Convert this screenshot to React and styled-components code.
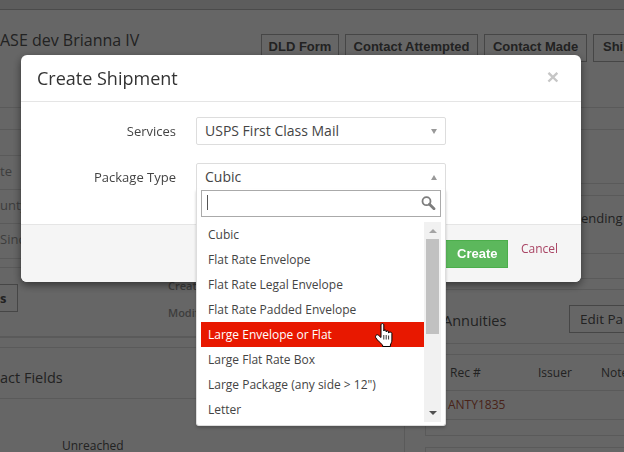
import React from 'react'
import styled, { createGlobalStyle } from 'styled-components'

const GlobalStyle = createGlobalStyle`
  html, body {
    margin: 0;
    padding: 0;
    background: #fff;
    font-family: "Open Sans", "Liberation Sans", sans-serif;
  }
`

const packageTypes = [
  'Cubic',
  'Flat Rate Envelope',
  'Flat Rate Legal Envelope',
  'Flat Rate Padded Envelope',
  'Large Envelope or Flat',
  'Large Flat Rate Box',
  'Large Package (any side > 12")',
  'Letter',
]

const HandCursor = () => (
  <svg width="18" height="24" viewBox="0 0 18 24">
    <path
      d="M6 1.800C6 .2 8.800 .2 8.800 1.800V8C8.800 6.600 11.200 6.600 11.200 8V9C11.200 7.600 13.600 7.600 13.600 9V10C13.600 8.800 16.900 8.800 16.900 10.300V17C16.900 19 15.900 20.500 15.400 22V23.500H7.600V22C6 20.500 2.500 17.500 .8 14.800C-.2 12.800 1.800 10.800 3.500 12.300L6 14.500Z"
      fill="#fff"
      stroke="#000"
      strokeWidth="1"
      strokeLinejoin="round"
    />
    <path d="M8.800 12v4.500M11.200 12v4.500M13.600 12.500v4" stroke="#333" strokeWidth="1" fill="none" />
  </svg>
)

const SearchGlyph = () => (
  <svg width="15" height="14" viewBox="0 0 15 14">
    <circle cx="5.500" cy="5.200" r="4" fill="none" stroke="#7d7d7d" strokeWidth="1.800" />
    <path d="M8.500 8.300L13 12.800" stroke="#7d7d7d" strokeWidth="2.800" strokeLinecap="round" />
  </svg>
)

const App = () => {
  return (
    <>
      <GlobalStyle />
      <Page>
        <TopBar />
        <TitleRow>
          <CaseTitle>ASE dev Brianna IV</CaseTitle>
          <Actions>
            <ActionButton $width={78}>DLD Form</ActionButton>
            <ActionButton $width={133}>Contact Attempted</ActionButton>
            <ActionButton $width={103}>Contact Made</ActionButton>
            <ActionButton $width={31} $open>Ship</ActionButton>
          </Actions>
        </TitleRow>
        <Columns>
          <LeftColumn>
            <InfoRow $height={22} />
            <InfoRow $height={26} />
            <InfoRow $height={34}>te</InfoRow>
            <InfoRow $height={34}>unty</InfoRow>
            <InfoRow $height={35}>Sinc</InfoRow>
            <InfoRow $height={9} />
            <MetaRow>
              <SmallButton>s</SmallButton>
              <MetaList>
                <MetaLabel>Creat</MetaLabel>
                <MetaLabel>Modifi</MetaLabel>
              </MetaList>
            </MetaRow>
            <Band />
            <FieldsTitle>act Fields</FieldsTitle>
            <UnreachedCell>Unreached</UnreachedCell>
          </LeftColumn>
          <RightColumn>
            <SideRow $height={22} />
            <SideRow $height={54} />
            <StatusRow>ending</StatusRow>
            <SideRow $height={25} />
            <AnnuitiesPanel>
              <AnnuitiesHeader>
                <AnnuitiesTitle>Annuities</AnnuitiesTitle>
                <EditButton>Edit Pa</EditButton>
              </AnnuitiesHeader>
              <AnnuitiesHeadRow>
                <HeadCell $width={88}>Rec #</HeadCell>
                <HeadCell $width={63}>Issuer</HeadCell>
                <HeadCell $width={23}>Note</HeadCell>
              </AnnuitiesHeadRow>
              <AnnuitiesRow>ANTY1835</AnnuitiesRow>
            </AnnuitiesPanel>
            <NextPanel />
          </RightColumn>
        </Columns>
      </Page>

      <Backdrop />

      <Modal>
        <ModalHeader>
          <ModalTitle>Create Shipment</ModalTitle>
          <CloseMark>×</CloseMark>
        </ModalHeader>
        <ModalBody>
          <FormRow>
            <FormLabel>Services</FormLabel>
            <SelectField>
              <SelectBox>
                USPS First Class Mail
                <Caret $dir="down" />
              </SelectBox>
            </SelectField>
          </FormRow>
          <FormRow>
            <FormLabel>Package Type</FormLabel>
            <SelectField>
              <SelectBox>
                Cubic
                <Caret $dir="up" />
              </SelectBox>
              <Dropdown>
                <SearchBox>
                  <TextCaret />
                  <SearchGlyph />
                </SearchBox>
                <ListArea>
                  <OptionList>
                    {packageTypes.map((name) => (
                      <Option key={name} $active={name === 'Large Envelope or Flat'}>
                        {name}
                      </Option>
                    ))}
                  </OptionList>
                  <ScrollTrack>
                    <ScrollArrow $dir="up" />
                    <ScrollThumb />
                    <ScrollArrow $dir="down" />
                  </ScrollTrack>
                </ListArea>
                <CursorSpot>
                  <HandCursor />
                </CursorSpot>
              </Dropdown>
            </SelectField>
          </FormRow>
        </ModalBody>
        <ModalFooter>
          <CreateButton>Create</CreateButton>
          <CancelLink>Cancel</CancelLink>
        </ModalFooter>
      </Modal>
    </>
  )
}

const Page = styled.div`
  width: 624px;
  height: 452px;
  overflow: hidden;
  background: #fff;
  color: #555;
`

const TopBar = styled.div`
  height: 9px;
  background: #e8e8e8;
  border-bottom: 1px solid #bbb;
`

const TitleRow = styled.div`
  display: flex;
  align-items: flex-start;
  height: 98px;
  padding-top: 24px;
  box-sizing: border-box;
  border-bottom: 1px solid #e2e2e2;
  white-space: nowrap;
`

const CaseTitle = styled.div`
  width: 261px;
  flex: none;
  margin-top: -6px;
  font-size: 16px;
  line-height: 24px;
`

const Actions = styled.div`
  display: flex;
  gap: 6px;
`

const ActionButton = styled.div`
  width: ${(p) => p.$width}px;
  flex: none;
  height: 28px;
  box-sizing: border-box;
  overflow: hidden;
  padding-left: ${(p) => (p.$open ? '9px' : '0')};
  border: 1px solid #b0b0b0;
  ${(p) => p.$open && 'border-right: 0;'}
  font-family: "Liberation Sans", Arial, sans-serif;
  font-size: 13px;
  font-weight: 700;
  line-height: 24px;
  text-align: ${(p) => (p.$open ? 'left' : 'center')};
  color: #555;
`

const Columns = styled.div`
  display: flex;
  height: 344px;
`

const LeftColumn = styled.div`
  width: 405px;
  flex: none;
  box-sizing: border-box;
  border-right: 1px solid #e2e2e2;
`

const InfoRow = styled.div`
  height: ${(p) => p.$height}px;
  box-sizing: border-box;
  padding-top: 5px;
  border-bottom: 1px solid #e2e2e2;
  font-size: 13px;
  line-height: 20px;
  color: #999;
`

const MetaRow = styled.div`
  display: flex;
  height: 68px;
  box-sizing: border-box;
  padding-top: 8px;
`

const SmallButton = styled.div`
  width: 18px;
  height: 28px;
  margin-top: 8px;
  box-sizing: border-box;
  border: 1px solid #b0b0b0;
  border-left: 0;
  font-size: 13px;
  font-weight: 700;
  line-height: 26px;
`

const MetaList = styled.div`
  display: flex;
  flex-direction: column;
  gap: 8px;
  margin-left: 150px;
`

const MetaLabel = styled.div`
  font-size: 11px;
  font-weight: 600;
  line-height: 19px;
  color: #999;
`

const Band = styled.div`
  height: 12px;
  box-sizing: border-box;
  border-top: 2px solid #e2e2e2;
  border-bottom: 1px solid #e2e2e2;
`

const FieldsTitle = styled.div`
  padding-top: 18px;
  font-size: 14.500px;
  line-height: 24px;
`

const UnreachedCell = styled.div`
  margin-top: 8px;
  padding: 38px 0 0 62px;
  border-top: 1px solid #e2e2e2;
  font-size: 12px;
  line-height: 18px;
`

const RightColumn = styled.div`
  flex: 1;
  padding-left: 20px;
  overflow: hidden;
`

const SideRow = styled.div`
  height: ${(p) => p.$height}px;
  box-sizing: border-box;
  margin-left: -20px;
  border-bottom: 1px solid #e2e2e2;
`

const StatusRow = styled.div`
  margin: 11px 0 0 -20px;
  height: 59px;
  box-sizing: border-box;
  padding: 12px 0 0 176px;
  border-top: 1px solid #e2e2e2;
  border-bottom: 1px solid #e2e2e2;
  font-size: 13px;
  line-height: 20px;
`

const AnnuitiesPanel = styled.div`
  margin-top: 10px;
  height: 147px;
  box-sizing: border-box;
  border: 1px solid #e2e2e2;
  border-right: 0;
`

const AnnuitiesHeader = styled.div`
  display: flex;
  align-items: flex-start;
  justify-content: space-between;
  height: 54px;
  box-sizing: border-box;
  padding: 15px 0 0 17px;
  border-bottom: 1px solid #e2e2e2;
`

const AnnuitiesTitle = styled.div`
  margin-top: 4px;
  font-size: 14.500px;
  line-height: 24px;
`

const EditButton = styled.div`
  width: 55px;
  height: 28px;
  box-sizing: border-box;
  padding-left: 10px;
  border: 1px solid #b0b0b0;
  border-right: 0;
  font-size: 13.500px;
  line-height: 26px;
  white-space: nowrap;
`

const AnnuitiesHeadRow = styled.div`
  display: flex;
  margin-top: 10px;
  height: 37px;
  box-sizing: border-box;
  padding: 9px 0 0 24px;
  border-top: 1px solid #e2e2e2;
  border-bottom: 1px solid #e2e2e2;
`

const HeadCell = styled.div`
  width: ${(p) => p.$width}px;
  flex: none;
  font-size: 12px;
  line-height: 18px;
`

const AnnuitiesRow = styled.div`
  height: 29px;
  box-sizing: border-box;
  padding-left: 22px;
  border-bottom: 1px solid #e2e2e2;
  font-size: 12px;
  line-height: 28px;
  color: #b5573f;
`

const NextPanel = styled.div`
  margin-top: 11px;
  height: 20px;
  border: 1px solid #e2e2e2;
  border-right: 0;
`

const Backdrop = styled.div`
  position: fixed;
  inset: 0;
  background: rgba(0, 0, 0, 0.6);
`

const Modal = styled.div`
  position: fixed;
  left: 21px;
  top: 55px;
  width: 560px;
  height: 227px;
  display: flex;
  flex-direction: column;
  background: #fff;
  border-radius: 6px;
  box-shadow: 0 3px 9px rgba(0, 0, 0, 0.5);
`

const ModalHeader = styled.div`
  flex: none;
  display: flex;
  align-items: center;
  justify-content: space-between;
  height: 47px;
  box-sizing: border-box;
  padding: 0 22px 0 16px;
  border-bottom: 1px solid #e5e5e5;
`

const ModalTitle = styled.div`
  font-size: 18px;
  line-height: 24px;
  color: #333;
`

const CloseMark = styled.div`
  margin-top: -2px;
  font-family: "Liberation Sans", Arial, sans-serif;
  font-size: 21px;
  font-weight: 700;
  line-height: 20px;
  color: #c6c6c6;
`

const ModalBody = styled.div`
  flex: 1;
  display: flex;
  flex-direction: column;
  gap: 18px;
  padding-top: 15px;
`

const FormRow = styled.div`
  display: flex;
  align-items: flex-start;
`

const FormLabel = styled.div`
  width: 155px;
  flex: none;
  padding-top: 4px;
  font-size: 13px;
  line-height: 20px;
  text-align: right;
  color: #444;
`

const SelectField = styled.div`
  position: relative;
  width: 250px;
  margin-left: 20px;
`

const SelectBox = styled.div`
  position: relative;
  height: 28px;
  box-sizing: border-box;
  padding-left: 8px;
  border: 1px solid #ddd;
  border-radius: 2px;
  background: #fff;
  font-size: 14px;
  line-height: 26px;
  color: #444;
`

const Caret = styled.span`
  position: absolute;
  right: 8px;
  top: 11px;
  width: 0;
  height: 0;
  border-left: 3px solid transparent;
  border-right: 3px solid transparent;
  ${(p) =>
    p.$dir === 'down' ? 'border-top: 5px solid #999;' : 'border-bottom: 5px solid #999;'}
`

const Dropdown = styled.div`
  position: absolute;
  left: 0;
  top: 26px;
  width: 250px;
  height: 237px;
  box-sizing: border-box;
  padding: 1px 4px 0 4px;
  background: #fff;
  border: 1px solid #ddd;
  border-top: 0;
  border-radius: 0 0 3px 3px;
  box-shadow: 0 2px 3px rgba(0, 0, 0, 0.2);
`

const SearchBox = styled.div`
  display: flex;
  align-items: center;
  justify-content: space-between;
  height: 27px;
  box-sizing: border-box;
  padding: 0 4px 2px 5px;
  border: 1px solid #aaa;
  background: #fff;
`

const TextCaret = styled.span`
  width: 1px;
  height: 15px;
  background: #555;
`

const ListArea = styled.div`
  display: flex;
  margin-top: 5px;
  height: 200px;
`

const OptionList = styled.div`
  flex: 1;
`

const Option = styled.div`
  height: 25px;
  padding-left: 7px;
  font-size: 12px;
  line-height: 25px;
  white-space: nowrap;
  color: ${(p) => (p.$active ? '#fff' : '#444')};
  background: ${(p) => (p.$active ? '#e81800' : '#fff')};
`

const ScrollTrack = styled.div`
  width: 17px;
  flex: none;
  display: flex;
  flex-direction: column;
  align-items: center;
  background: #f1f1f1;
`

const ScrollArrow = styled.span`
  width: 0;
  height: 0;
  border-left: 4px solid transparent;
  border-right: 4px solid transparent;
  ${(p) =>
    p.$dir === 'up'
      ? 'margin: 7px 0 6px; border-bottom: 4px solid #a3a3a3;'
      : 'margin: auto 0 7px; border-top: 4px solid #505050;'}
`

const ScrollThumb = styled.div`
  width: 13px;
  height: 95px;
  background: #c1c1c1;
`

const CursorSpot = styled.div`
  position: absolute;
  left: 178px;
  top: 134px;
  height: 24px;
`

const ModalFooter = styled.div`
  flex: none;
  display: flex;
  align-items: flex-start;
  gap: 13px;
  height: 58px;
  box-sizing: border-box;
  padding: 15px 0 0 416px;
  background: #f5f5f5;
  border-top: 1px solid #e5e5e5;
  border-radius: 0 0 6px 6px;
`

const CreateButton = styled.div`
  width: 71px;
  height: 28px;
  box-sizing: border-box;
  padding-left: 19px;
  background: #5cb85c;
  border: 1px solid #4cae4c;
  font-family: "Liberation Sans", Arial, sans-serif;
  font-size: 13px;
  font-weight: 700;
  line-height: 26px;
  color: #fff;
`

const CancelLink = styled.div`
  font-size: 12px;
  line-height: 18px;
  color: #a94464;
`

export default App
